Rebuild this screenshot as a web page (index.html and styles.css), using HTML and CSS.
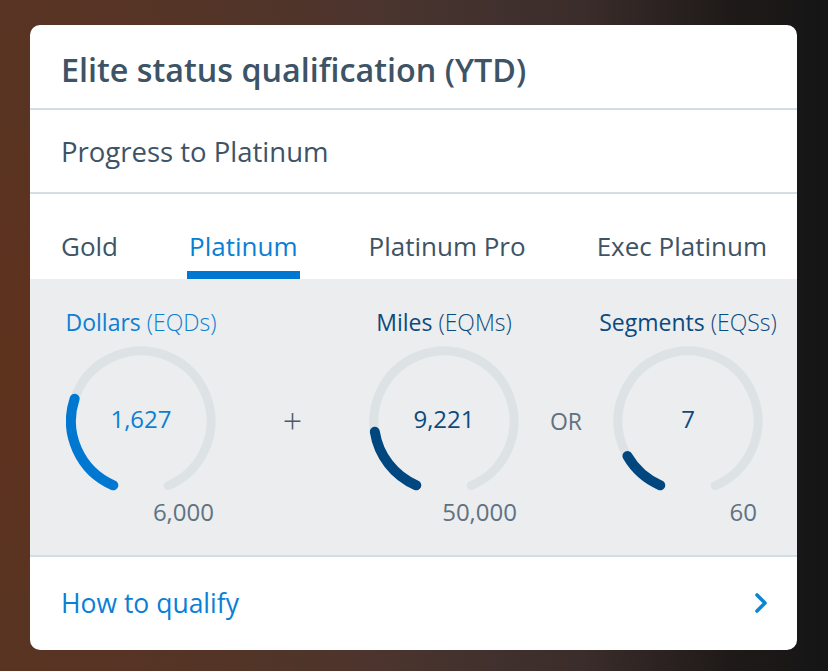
FILE: index.html
```html
<!DOCTYPE html>
<html lang="en">
<head>
<meta charset="utf-8">
<title>Elite status qualification</title>
<link rel="stylesheet" href="styles.css">
</head>
<body>
<div class="card">
  <div class="header"><h1 class="title">Elite status qualification (YTD)</h1></div>
  <div class="subheader">Progress to Platinum</div>
  <div class="tabs">
    <span class="tab">Gold</span>
    <span class="tab active">Platinum</span>
    <span class="tab">Platinum Pro</span>
    <span class="tab">Exec Platinum</span>
  </div>
  <div class="gauges">
    <div class="gauge">
      <div class="label blue"><span class="strong">Dollars</span> <span class="light">(EQDs)</span></div>
      <div class="dial">
        <svg width="150" height="150" viewBox="0 0 150 150">
          <circle class="track" cx="75" cy="75" r="70" stroke-dasharray="382.9 439.8" transform="rotate(113.3 75 75)"/>
          <circle class="prog blue-stroke" cx="75" cy="75" r="70" stroke-dasharray="103.8 439.8" transform="rotate(113.3 75 75)"/>
        </svg>
        <div class="value blue">1,627</div>
      </div>
      <div class="max">6,000</div>
    </div>
    <div class="op plus">+</div>
    <div class="gauge">
      <div class="label navy"><span class="strong">Miles</span> <span class="light">(EQMs)</span></div>
      <div class="dial">
        <svg width="150" height="150" viewBox="0 0 150 150">
          <circle class="track" cx="75" cy="75" r="70" stroke-dasharray="382.9 439.8" transform="rotate(113.3 75 75)"/>
          <circle class="prog navy-stroke" cx="75" cy="75" r="70" stroke-dasharray="70.6 439.8" transform="rotate(113.3 75 75)"/>
        </svg>
        <div class="value navy">9,221</div>
      </div>
      <div class="max">50,000</div>
    </div>
    <div class="op or">OR</div>
    <div class="gauge">
      <div class="label navy"><span class="strong">Segments</span> <span class="light">(EQSs)</span></div>
      <div class="dial">
        <svg width="150" height="150" viewBox="0 0 150 150">
          <circle class="track" cx="75" cy="75" r="70" stroke-dasharray="382.9 439.8" transform="rotate(113.3 75 75)"/>
          <circle class="prog navy-stroke" cx="75" cy="75" r="70" stroke-dasharray="44.7 439.8" transform="rotate(113.3 75 75)"/>
        </svg>
        <div class="value navy">7</div>
      </div>
      <div class="max max-short">60</div>
    </div>
  </div>
  <div class="footer">
    <span class="link">How to qualify</span>
    <svg class="chev" width="16" height="22" viewBox="0 0 16 22">
      <path d="M4 3 L12 11 L4 19" fill="none" stroke="#0b86d6" stroke-width="3.6" stroke-linecap="round" stroke-linejoin="round"/>
    </svg>
  </div>
</div>
</body>
</html>
```
FILE: styles.css
```css
* { box-sizing: border-box; }
html, body { margin: 0; padding: 0; }
body {
  width: 828px;
  height: 671px;
  overflow: hidden;
  font-family: "Open Sans", "Noto Sans", sans-serif;
  background:
    radial-gradient(ellipse 500px 700px at 0px 360px, rgba(95,50,28,0.9), rgba(95,50,28,0) 100%),
    linear-gradient(90deg, #533529 0%, #4a3530 45%, #3b2d2b 70%, #1f1a19 88%, #151515 100%);
  padding: 25px 31px 0 30px;
}
.card {
  width: 767px;
  height: 625px;
  background: #fff;
  border-radius: 10px;
  overflow: hidden;
  display: flex;
  flex-direction: column;
}
.header {
  height: 85px;
  border-bottom: 2px solid #d2dde4;
  padding: 0 31px;
  display: flex;
  align-items: center;
}
.title {
  margin: 0;
  font-size: 32.3px;
  font-weight: 600;
  color: #3d5366;
  position: relative;
  top: 2px;
}
.subheader {
  height: 84px;
  border-bottom: 2px solid #d2dde4;
  padding: 0 31px;
  display: flex;
  align-items: center;
  font-size: 27.5px;
  color: #3e5366;
}
.tabs {
  height: 85px;
  display: flex;
  justify-content: space-between;
  align-items: flex-end;
  padding: 0 30px 0 31px;
}
.tab {
  position: relative;
  font-size: 26px;
  color: #3e5366;
  padding-bottom: 16px;
  line-height: 34px;
}
.tab.active { color: #0a7fd4; }
.tab.active::after {
  content: "";
  position: absolute;
  left: -2px;
  right: -2px;
  bottom: 0;
  height: 8px;
  background: #0078d2;
}
.gauges {
  height: 278px;
  background: #ebedef;
  border-bottom: 2px solid #d2dde4;
  display: grid;
  grid-template-columns: 150px 153px 150px 94px 150px;
  align-items: start;
  padding: 29px 0 0 36px;
}
.gauge {
  display: flex;
  flex-direction: column;
  align-items: center;
}
.label {
  font-size: 23px;
  line-height: 28px;
  white-space: nowrap;
  margin-bottom: 10px;
}
.label .strong { font-weight: 500; }
.label .light { font-weight: 300; }
.blue { color: #0a7fd4; }
.navy { color: #0b4a80; }
.dial {
  position: relative;
  width: 150px;
  height: 150px;
}
.dial svg { display: block; }
.track {
  fill: none;
  stroke: #dde3e5;
  stroke-width: 9;
  stroke-linecap: round;
}
.prog {
  fill: none;
  stroke-width: 10;
  stroke-linecap: round;
}
.blue-stroke { stroke: #0078d2; }
.navy-stroke { stroke: #00467f; }
.value {
  position: absolute;
  left: 0;
  right: 0;
  top: 57px;
  text-align: center;
  font-size: 24px;
  line-height: 32px;
}
.max {
  align-self: flex-end;
  font-size: 24px;
  line-height: 28px;
  color: #5f7282;
  margin-top: 2px;
  padding-right: 2px;
}
.max-short { padding-right: 6px; }
.op {
  display: flex;
  align-items: center;
  justify-content: center;
  color: #4a5a68;
  margin-top: 38px;
  height: 150px;
}
.plus { font-size: 34px; font-weight: 300; line-height: 1; }
.or { font-size: 23px; color: #5f7282; }
.footer {
  flex: 1;
  display: flex;
  align-items: center;
  justify-content: space-between;
  padding: 0 28px 2px 31px;
}
.link {
  font-size: 26.5px;
  color: #0a7fd4;
}
.chev { display: block; }
```
